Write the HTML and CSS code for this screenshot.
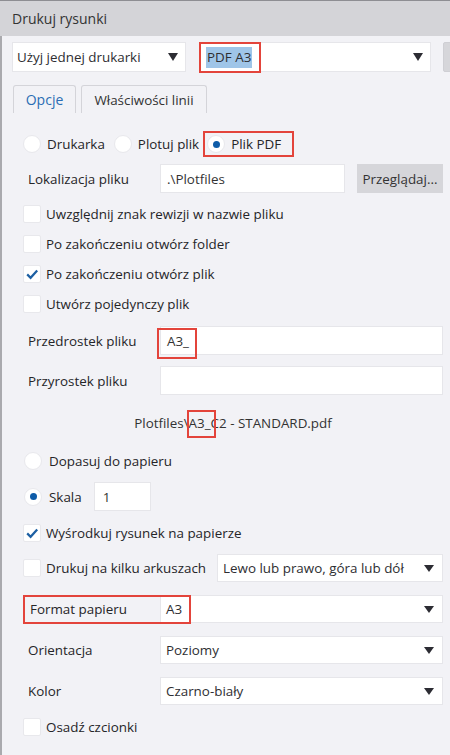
FILE: index.html
```html
<!DOCTYPE html>
<html lang="pl">
<head>
<meta charset="utf-8">
<title>Drukuj rysunki</title>
<link rel="stylesheet" href="styles.css">
</head>
<body>
<div class="titlebar">Drukuj rysunki</div>
<div class="main">
  <div class="toprow">
    <div class="select sel-mode"><span class="val">Użyj jednej drukarki</span><span class="arrow"></span></div>
    <div class="select sel-printer"><span class="val"><span class="highlight">PDF A3</span></span><span class="arrow"></span><span class="mark mark-printer"></span></div>
    <div class="edge-btn"></div>
  </div>
  <div class="tabs">
    <div class="tab active">Opcje</div>
    <div class="tab">Właściwości linii</div>
  </div>
  <div class="panel">
    <div class="row r-radios">
      <div class="opt"><span class="radio"></span>Drukarka</div>
      <div class="opt"><span class="radio"></span>Plotuj plik</div>
      <div class="opt boxed"><span class="radio on"></span>Plik PDF</div>
    </div>
    <div class="row field r-loc">
      <span class="lbl">Lokalizacja pliku</span>
      <div class="input loc">.\Plotfiles</div>
      <div class="button">Przeglądaj...</div>
    </div>
    <div class="row r-check r-first"><span class="check"></span>Uwzględnij znak rewizji w nazwie pliku</div>
    <div class="row r-check"><span class="check"></span>Po zakończeniu otwórz folder</div>
    <div class="row r-check"><span class="check on"><svg viewBox="0 0 18 18" width="18" height="18"><path d="M4.2 9.4 L7.6 12.8 L14.2 5.4" fill="none" stroke="#1c5fa3" stroke-width="2.2"/></svg></span>Po zakończeniu otwórz plik</div>
    <div class="row r-check"><span class="check"></span>Utwórz pojedynczy plik</div>
    <div class="row field r-prefix">
      <span class="lbl">Przedrostek pliku</span>
      <div class="input grow">A3_<span class="mark mark-prefix"></span></div>
    </div>
    <div class="row field r-suffix">
      <span class="lbl">Przyrostek pliku</span>
      <div class="input grow"></div>
    </div>
    <div class="row r-path"><span>Plotfiles\<span class="marked">A3_</span>C2 - STANDARD.pdf</span></div>
    <div class="row r-opt r-fit"><span class="radio"></span>Dopasuj do papieru</div>
    <div class="row r-opt r-scale"><span class="radio on"></span>Skala<div class="input scale">1</div></div>
    <div class="row r-check r-center"><span class="check on"><svg viewBox="0 0 18 18" width="18" height="18"><path d="M4.2 9.4 L7.6 12.8 L14.2 5.4" fill="none" stroke="#1c5fa3" stroke-width="2.2"/></svg></span>Wyśrodkuj rysunek na papierze</div>
    <div class="row r-check r-tile"><span class="check"></span><span class="tile-lbl">Drukuj na kilku arkuszach</span><div class="select grow small"><span class="val">Lewo lub prawo, góra lub dół</span><span class="arrow"></span></div></div>
    <div class="row field r-format">
      <span class="lbl lbl-format">Format papieru</span>
      <div class="select grow small"><span class="val">A3</span><span class="arrow"></span></div>
      <span class="mark mark-format"></span>
    </div>
    <div class="row field r-orient">
      <span class="lbl">Orientacja</span>
      <div class="select grow small"><span class="val">Poziomy</span><span class="arrow"></span></div>
    </div>
    <div class="row field r-color">
      <span class="lbl">Kolor</span>
      <div class="select grow small"><span class="val">Czarno-biały</span><span class="arrow"></span></div>
    </div>
    <div class="row r-check r-fonts"><span class="check"></span>Osadź czcionki</div>
  </div>
</div>
</body>
</html>
```
FILE: styles.css
```css
* { box-sizing: border-box; }
html, body { margin: 0; padding: 0; }
body {
  width: 450px;
  height: 755px;
  overflow: hidden;
  background: #f2f2f6;
  font-family: "Open Sans", "Noto Sans", sans-serif;
  font-size: 13.4px;
  color: #252528;
}
.titlebar {
  height: 36px;
  background: #d4d4d8;
  border-top: 1px solid #8e8e93;
  padding-left: 12px;
  display: flex;
  align-items: center;
  font-size: 14px;
  color: #333;
}
.main {
  height: 719px;
  border-left: 2px solid #aaaaae;
  padding: 6px 7px 0 10px;
  overflow: hidden;
}
.toprow {
  display: flex;
  height: 30px;
}
.select {
  position: relative;
  display: flex;
  align-items: center;
  justify-content: space-between;
  background: #fff;
  border: 1px solid #e6e6ea;
  padding: 0 7px 0 4px;
  height: 100%;
  flex-shrink: 0;
  color: #2e2e32;
}
.sel-mode { width: 174px; }
.sel-printer { width: 232px; margin-left: 13px; padding-left: 6px; }
.highlight {
  background: #9fc5e8;
  padding: 1px 1px 2px 1px;
}
.arrow {
  width: 0;
  height: 0;
  border-left: 5.5px solid transparent;
  border-right: 5.5px solid transparent;
  border-top: 8px solid #2c2c33;
}
.small .arrow {
  border-left-width: 5px;
  border-right-width: 5px;
  border-top-width: 7px;
}
.edge-btn {
  flex-shrink: 0;
  width: 80px;
  margin-left: 12px;
  background: #d6d6da;
  border: 1px solid #cfcfd4;
  border-radius: 2px;
}
.mark {
  position: absolute;
  border: 2px solid #e3443b;
  pointer-events: none;
}
.mark-printer { left: -1px; top: -1px; width: 62px; height: 31px; }
.tabs {
  display: flex;
  margin-top: 13px;
  height: 28px;
}
.tab {
  display: flex;
  align-items: center;
  justify-content: center;
  border: 1px solid #d4d4d9;
  border-bottom: none;
  border-radius: 3px 3px 0 0;
  color: #333;
}
.tab.active { width: 63px; margin-left: 1px; color: #2a6db4; font-size: 14px; }
.tab + .tab { width: 126px; margin-left: 5px; }
.panel {
  display: flex;
  flex-direction: column;
  padding-left: 11px;
}
.row {
  display: flex;
  align-items: center;
  flex-shrink: 0;
}
.r-radios { margin-top: 16px; height: 30px; }
.opt { display: flex; align-items: center; gap: 6px; margin-right: 9px; }
.opt.boxed {
  margin-left: -5px;
  border: 2px solid #e3443b;
  padding: 2px 11px 2px 2px;
}
.radio {
  width: 18px;
  height: 18px;
  border-radius: 50%;
  background: #fff;
  border: 1px solid #e8e8ec;
  display: flex;
  align-items: center;
  justify-content: center;
  flex-shrink: 0;
}
.radio.on::after {
  content: "";
  width: 7px;
  height: 7px;
  border-radius: 50%;
  background: #0e5ca8;
}
.field .lbl { width: 137px; padding-left: 5px; flex-shrink: 0; }
.input {
  position: relative;
  background: #fff;
  border: 1px solid #e6e6ea;
  height: 100%;
  display: flex;
  align-items: center;
  padding-left: 6px;
  color: #333;
}
.grow { flex: 1; flex-shrink: 1; }
.r-loc { margin-top: 5px; height: 29px; }
.loc { width: 185px; }
.button {
  margin-left: 12px;
  flex: 1;
  height: 100%;
  background: #d6d6da;
  display: flex;
  align-items: center;
  justify-content: center;
  color: #333;
}
.r-check { height: 30px; gap: 5px; }
.r-first { margin-top: 6px; }
.check {
  width: 18px;
  height: 18px;
  background: #fff;
  border: 1px solid #e8e8ec;
  border-radius: 2px;
  flex-shrink: 0;
  position: relative;
}
.check svg { position: absolute; left: -1px; top: -1px; }
.r-prefix { margin-top: 7px; height: 29px; }
.mark-prefix { left: -4px; top: 1px; width: 40px; height: 31px; }
.r-suffix { margin-top: 11px; height: 29px; }
.r-path { margin-top: 13px; height: 30px; justify-content: center; color: #333; }
.marked { position: relative; }
.marked::after {
  content: "";
  position: absolute;
  left: -2px;
  right: -5px;
  top: -4px;
  bottom: -6px;
  border: 2px solid #e3443b;
}
.r-opt { gap: 7px; padding-left: 1px; }
.r-fit { margin-top: 8px; height: 30px; }
.r-scale { margin-top: 6px; height: 29px; }
.scale { width: 57px; margin-left: 5px; padding-left: 8px; }
.r-center { margin-top: 7px; }
.r-tile { margin-top: 6px; height: 28px; }
.tile-lbl { width: 166px; flex-shrink: 0; }
.small { padding: 0 8px 0 5px; flex-shrink: 1; }
.r-format { margin-top: 13px; height: 28px; position: relative; }
.lbl-format { padding-left: 7px !important; }
.mark-format { left: 0; top: 0; width: 168px; height: 29px; }
.r-orient { margin-top: 13px; height: 28px; }
.r-color { margin-top: 13px; height: 28px; }
.r-fonts { margin-top: 7px; }
```
